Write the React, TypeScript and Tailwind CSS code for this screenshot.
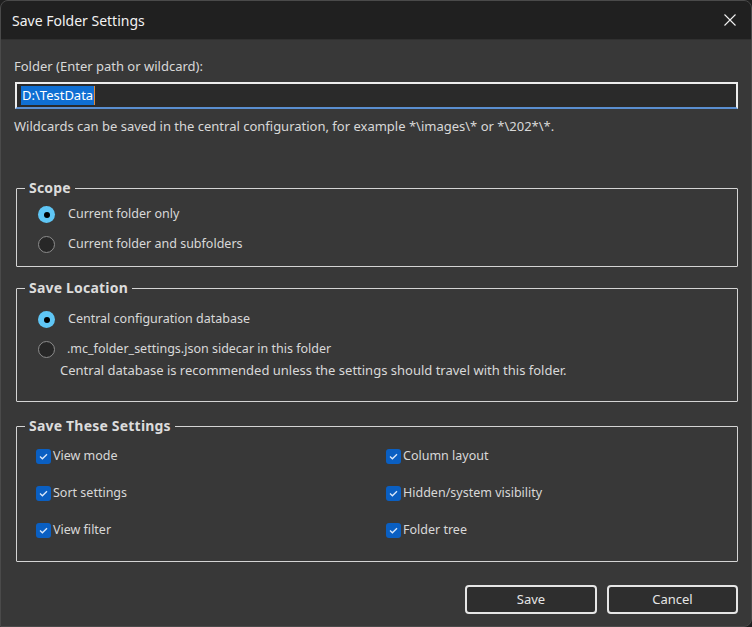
import React, { useState } from "react";

const font = { fontFamily: '"Noto Sans", "Open Sans", Arial, sans-serif' };

const Radio = ({ checked }: { checked: boolean }) =>
  checked ? (
    <span className="w-[17px] h-[17px] rounded-full bg-[#5fc6f5] flex items-center justify-center shrink-0">
      <span className="w-[6px] h-[6px] rounded-full bg-black" />
    </span>
  ) : (
    <span className="w-[17px] h-[17px] rounded-full bg-[#272727] border border-[#8c8c8c] shrink-0" />
  );

const Check = () => (
  <span className="w-[15px] h-[15px] rounded-[3px] bg-[#0a5fc2] flex items-center justify-center shrink-0">
    <svg width="9" height="7" viewBox="0 0 9 7" fill="none">
      <path d="M1 3.6 L3.4 5.8 L8 1.2" stroke="#dbe9fb" strokeWidth="1.3" />
    </svg>
  </span>
);

const GroupBox = ({ title, className, children }: { title: string; className?: string; children: React.ReactNode }) => (
  <fieldset className={"border border-[#d4d4d4] rounded-[1px] ml-[15px] mr-[13px] px-0 " + (className ?? "")}>
    <legend className="ml-[8px] px-[4px] text-[14px] font-bold text-[#dcdcdc] leading-[14px] tracking-[0.2px]">{title}</legend>
    {children}
  </fieldset>
);

export default function App() {
  const [scope] = useState(0);
  const [loc] = useState(0);

  const left = ["View mode", "Sort settings", "View filter"];
  const right = ["Column layout", "Hidden/system visibility", "Folder tree"];

  return (
    <div className="w-[752px] h-[627px] bg-[#1f1f1f] overflow-hidden" style={font}>
      <div className="w-full h-full flex flex-col rounded-t-[8px] rounded-br-[8px] overflow-hidden border border-[#4a4a4a] bg-[#383838] text-[12.5px] text-[#d8d8d8]">
        <div className="h-[39px] shrink-0 bg-[#202020] border-b border-[#303030] flex items-center justify-between pl-[11px] pr-[13px]">
          <span className="text-[14px] text-[#f2f2f2]">Save Folder Settings</span>
          <svg width="12" height="12" viewBox="0 0 12 12" className="mr-[2px]">
            <path d="M0.5 0.5 L11.5 11.5 M11.5 0.5 L0.5 11.5" stroke="#f0f0f0" strokeWidth="1.1" />
          </svg>
        </div>

        <div className="flex flex-col">
          <div className="pl-[13px] pt-[18px] leading-[17px] text-[13px]">Folder (Enter path or wildcard):</div>
          <div className="ml-[14px] mr-[13px] mt-[7px] h-[27px] bg-[#2a2a2a] border-2 border-[#ededed] border-b-[#5b8fd0] flex items-center pl-[4px]">
            <span className="bg-[#0f6fd3] text-white text-[13px] leading-[19px] px-[1px] border-r border-[#e08a3a]">D:\TestData</span>
          </div>
          <div className="pl-[13px] pt-[9px] leading-[17px] text-[13px]">
            Wildcards can be saved in the central configuration, for example *\images\* or *\202*\*.
          </div>

          <GroupBox title="Scope" className="mt-[46px] h-[86px]">
            <div className="flex flex-col gap-[13px] pl-[21px] pt-[11px]">
              <label className="flex items-center gap-[13px] h-[17px]"><Radio checked={scope === 0} />Current folder only</label>
              <label className="flex items-center gap-[13px] h-[17px]"><Radio checked={scope === 1} />Current folder and subfolders</label>
            </div>
          </GroupBox>

          <GroupBox title="Save Location" className="mt-[14px] h-[121px]">
            <div className="flex flex-col pl-[21px] pt-[16px]">
              <label className="flex items-center gap-[13px] h-[17px]"><Radio checked={loc === 0} />Central configuration database</label>
              <label className="flex items-center gap-[12px] h-[17px] mt-[13px]"><Radio checked={loc === 1} />.mc_folder_settings.json sidecar in this folder</label>
              <div className="pl-[22px] mt-[4px] leading-[17px] text-[13px]">Central database is recommended unless the settings should travel with this folder.</div>
            </div>
          </GroupBox>

          <GroupBox title="Save These Settings" className="mt-[17px] h-[143px]">
            <div className="grid grid-cols-[350px_1fr] pl-[19px] pt-[15px]">
              <div className="flex flex-col gap-[20px]">
                {left.map((t) => (
                  <label key={t} className="flex items-center gap-[2px] h-[17px]"><Check />{t}</label>
                ))}
              </div>
              <div className="flex flex-col gap-[20px]">
                {right.map((t) => (
                  <label key={t} className="flex items-center gap-[2px] h-[17px]"><Check />{t}</label>
                ))}
              </div>
            </div>
          </GroupBox>

          <div className="flex justify-end gap-[10px] mr-[13px] mt-[23px]">
            <button className="w-[132px] h-[29px] rounded-[4px] border-2 border-[#e6e6e6] bg-[#2e2e2e] text-[#e6e6e6] text-[13px]">Save</button>
            <button className="w-[131px] h-[29px] rounded-[4px] border-2 border-[#e6e6e6] bg-[#2e2e2e] text-[#e6e6e6] text-[13px]">Cancel</button>
          </div>
        </div>
      </div>
    </div>
  );
}
